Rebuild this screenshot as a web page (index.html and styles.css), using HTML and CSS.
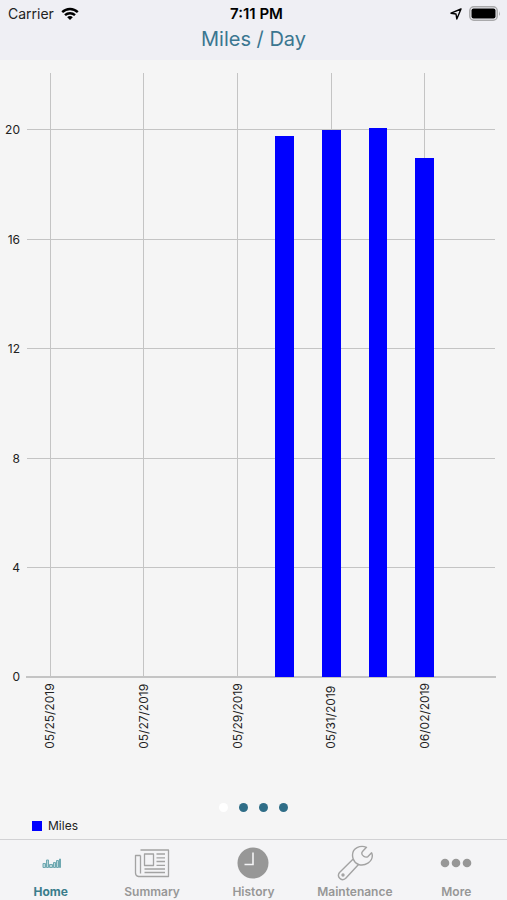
FILE: index.html
```html
<!DOCTYPE html>
<html lang="en">
<head>
    <meta charset="UTF-8">
    <meta name="viewport" content="width=device-width, initial-scale=1.0">
    <title>Miles / Day</title>
    <link rel="stylesheet" href="styles.css">
</head>
<body>
    <header>
        <div class="status-bar">
            <div class="status-left">
                <span>Carrier</span>
                <svg width="18" height="14" viewBox="0 0 18 14" fill="none" stroke="#000" stroke-width="2.4">
                    <path d="M1.2 5.2C5.6 .9 12.4 .9 16.8 5.2"/>
                    <path d="M4 8.2C6.8 5.5 11.2 5.5 14 8.2"/>
                    <path d="M9 13L6.2 10.2C7.8 8.7 10.2 8.7 11.8 10.2Z" fill="#000" stroke="none"/>
                </svg>
            </div>
            <span class="status-time">7:11 PM</span>
            <div class="status-right">
                <svg width="12" height="12" viewBox="0 0 12 12" fill="none" stroke="#000" stroke-width="1.4" stroke-linejoin="round">
                    <path d="M11 1L1 5.2L6 6L6.8 11Z"/>
                </svg>
                <svg width="32" height="15" viewBox="0 0 32 15">
                    <rect x=".8" y=".8" width="27.4" height="13.4" rx="4" fill="none" stroke="#a9a9ab" stroke-width="1.5"/>
                    <rect x="2.5" y="2.5" width="24" height="10" rx="2" fill="#000"/>
                    <path d="M30 5Q31.8 7.5 30 10Z" fill="#a9a9ab"/>
                </svg>
            </div>
        </div>
        <h1>Miles / Day</h1>
    </header>

    <main>
        <div class="chart">
            <div class="y-axis">
                <div class="band-top"></div>
                <div class="band"><span>20</span></div>
                <div class="band"><span>16</span></div>
                <div class="band"><span>12</span></div>
                <div class="band"><span>8</span></div>
                <div class="band"><span>4</span></div>
                <div class="band-end"><span>0</span></div>
            </div>
            <div class="plot">
                <div class="lines">
                    <div class="band-top"></div>
                    <div class="band"></div>
                    <div class="band"></div>
                    <div class="band"></div>
                    <div class="band"></div>
                    <div class="band"></div>
                    <div class="band-end"></div>
                </div>
                <div class="columns">
                    <div class="column marked"></div>
                    <div class="column"></div>
                    <div class="column marked"></div>
                    <div class="column"></div>
                    <div class="column marked"></div>
                    <div class="column"><div class="bar" style="height: 89.6%"></div></div>
                    <div class="column marked"><div class="bar" style="height: 90.5%"></div></div>
                    <div class="column"><div class="bar" style="height: 90.9%"></div></div>
                    <div class="column marked"><div class="bar" style="height: 86%"></div></div>
                    <div class="column"></div>
                </div>
            </div>
            <div class="x-axis">
                <span class="date">05/25/2019</span>
                <span></span>
                <span class="date">05/27/2019</span>
                <span></span>
                <span class="date">05/29/2019</span>
                <span></span>
                <span class="date">05/31/2019</span>
                <span></span>
                <span class="date">06/02/2019</span>
                <span></span>
            </div>
        </div>

        <div class="pager">
            <button type="button" class="dot current" aria-label="Page 1"></button>
            <button type="button" class="dot" aria-label="Page 2"></button>
            <button type="button" class="dot" aria-label="Page 3"></button>
            <button type="button" class="dot" aria-label="Page 4"></button>
        </div>

        <div class="legend">
            <span class="swatch"></span>
            <span>Miles</span>
        </div>
    </main>

    <nav class="tab-bar">
        <a href="#" class="tab active">
            <svg width="36" height="36" viewBox="0 0 36 36" fill="#b9d6da" stroke="#6fa8b1" stroke-width="1">
                <path d="M10 18.5h2.5v4H10zM13.5 15h2v7.5h-2zM16.5 19.5h3v3h-3zM20.5 17.5h2v5h-2zM23.5 15.5h2v7h-2zM26.500 14h1v8.500h-1z"/>
            </svg>
            <span>Home</span>
        </a>
        <a href="#" class="tab">
            <svg width="36" height="36" viewBox="0 0 36 36" fill="none" stroke="#a3a3a3" stroke-width="1.3" stroke-linejoin="round">
                <path d="M6.5 5h28v26.5h-30q-3-.5-3-3.5V10.5h5"/>
                <path d="M6.5 10.5v18"/>
                <rect x="10.5" y="9" width="9" height="11.5"/>
                <path d="M22.5 9h8.5M22.5 12.8h8.5M22.5 16.5h8.5M22.5 20.3h8.5M10.5 24h20.5M10.5 27.5h20.5"/>
            </svg>
            <span>Summary</span>
        </a>
        <a href="#" class="tab">
            <svg width="36" height="36" viewBox="0 0 36 36">
                <circle cx="18" cy="18" r="15.5" fill="#979797"/>
                <path d="M18 7.5V19.5H9.5" fill="none" stroke="#f4f4f6" stroke-width="1.6"/>
            </svg>
            <span>History</span>
        </a>
        <a href="#" class="tab">
            <svg width="36" height="36" viewBox="0 0 36 36" fill="none" stroke="#a3a3a3" stroke-width="1.4" stroke-linejoin="round">
                <path d="M29.5 2.3C23 -.5 15.500 3.500 15.500 10C15.500 11.500 15.800 12.800 16.200 14L2.500 27.500C-.5 31.500 4 37 8.500 33.500L21.500 19.500C28 21.500 35.500 17 35.300 10.500C35.300 9.500 35 8.600 34.600 7.800L31 11.600C28.500 13 24.500 11 24.800 7.800Q25 6.800 29.500 2.300Z"/>
                <path d="M16.200 14Q17.800 18.200 21.500 19.500"/>
                <circle cx="6" cy="30" r="1" fill="#a3a3a3"/>
            </svg>
            <span>Maintenance</span>
        </a>
        <a href="#" class="tab">
            <svg width="36" height="36" viewBox="0 0 36 36" fill="#979797">
                <circle cx="7" cy="18" r="4.3"/>
                <circle cx="18" cy="18" r="4.3"/>
                <circle cx="29" cy="18" r="4.3"/>
            </svg>
            <span>More</span>
        </a>
    </nav>
</body>
</html>
```
FILE: styles.css
```css
* {
    margin: 0;
    padding: 0;
    box-sizing: border-box;
    font-family: Inter, Roboto, sans-serif;
}

body {
    display: flex;
    flex-direction: column;
    height: 100vh;
    min-height: 500px;
    background-color: #f5f5f5;
    color: #222;
    font-size: 12px;
}

header {
    background-color: #efeff4;
    height: 60px;
}

.status-bar {
    display: grid;
    grid-template-columns: 1fr auto 1fr;
    align-items: center;
    height: 27px;
    padding: 0 6px 0 8px;
    font-size: 14px;
}

.status-left,
.status-right {
    display: flex;
    align-items: center;
    gap: 7px;
}

.status-right {
    justify-content: flex-end;
}

.status-time {
    padding-left: 4px;
    color: #000;
    font-size: 15px;
    font-weight: 600;
}

h1 {
    color: #3a7690;
    font-size: 20px;
    font-weight: 400;
    line-height: 24px;
    text-align: center;
}

main {
    flex: 1;
    min-height: 0;
    display: flex;
    flex-direction: column;
    padding: 13px 12px 5px 0;
}

/* chart */
.chart {
    flex: 1;
    min-height: 0;
    display: grid;
    grid-template-columns: 27px 1fr;
    grid-template-rows: 1fr auto;
}

.y-axis,
.lines {
    display: flex;
    flex-direction: column;
}

.band-top {
    flex: 21;
}

.band {
    flex: 40;
}

.band,
.band-end {
    height: 0;
}

.y-axis {
    padding-right: 7px;
    text-align: right;
    line-height: 0;
}

.plot {
    display: grid;
}

.lines,
.columns {
    grid-area: 1 / 1;
}

.lines .band {
    box-shadow: 0 -1px #c4c4c4;
}

.lines .band-end {
    box-shadow: 0 0 0 1px #c4c4c4;
}

.columns,
.x-axis {
    display: grid;
    grid-template-columns: repeat(10, 1fr);
}

.column {
    display: flex;
    align-items: flex-end;
    justify-content: center;
}

.marked {
    background: linear-gradient(#c4c4c4, #c4c4c4) center / 1px 100% no-repeat;
}

.bar {
    width: 40%;
    background-color: #0000ff;
}

.x-axis {
    grid-column: 2;
    justify-items: center;
    padding-top: 6px;
}

.date {
    line-height: 16px;
    writing-mode: vertical-rl;
    transform: rotate(180deg);
}

.pager {
    display: flex;
    justify-content: center;
    gap: 11px;
    margin: 54px -12px 6px 0;
}

.dot {
    width: 9px;
    height: 9px;
    border: none;
    border-radius: 50%;
    background-color: #2f6d87;
    cursor: pointer;
}

.dot.current {
    background-color: #fff;
}

.legend {
    display: flex;
    align-items: center;
    gap: 6px;
    padding-left: 32px;
    line-height: 16px;
}

.swatch {
    width: 10px;
    height: 10px;
    background-color: #0000ff;
}

/* bottom tabs */
.tab-bar {
    display: grid;
    grid-template-columns: repeat(5, 1fr);
    height: 61px;
    border-top: 1px solid #d2d2d4;
    background-color: #f4f4f6;
}

.tab {
    display: flex;
    flex-direction: column;
    align-items: center;
    gap: 3px;
    padding-top: 5px;
    color: #979797;
    font-weight: 600;
    line-height: 16px;
    text-decoration: none;
}

.tab.active {
    color: #3a7d8c;
    font-weight: 700;
}
```
